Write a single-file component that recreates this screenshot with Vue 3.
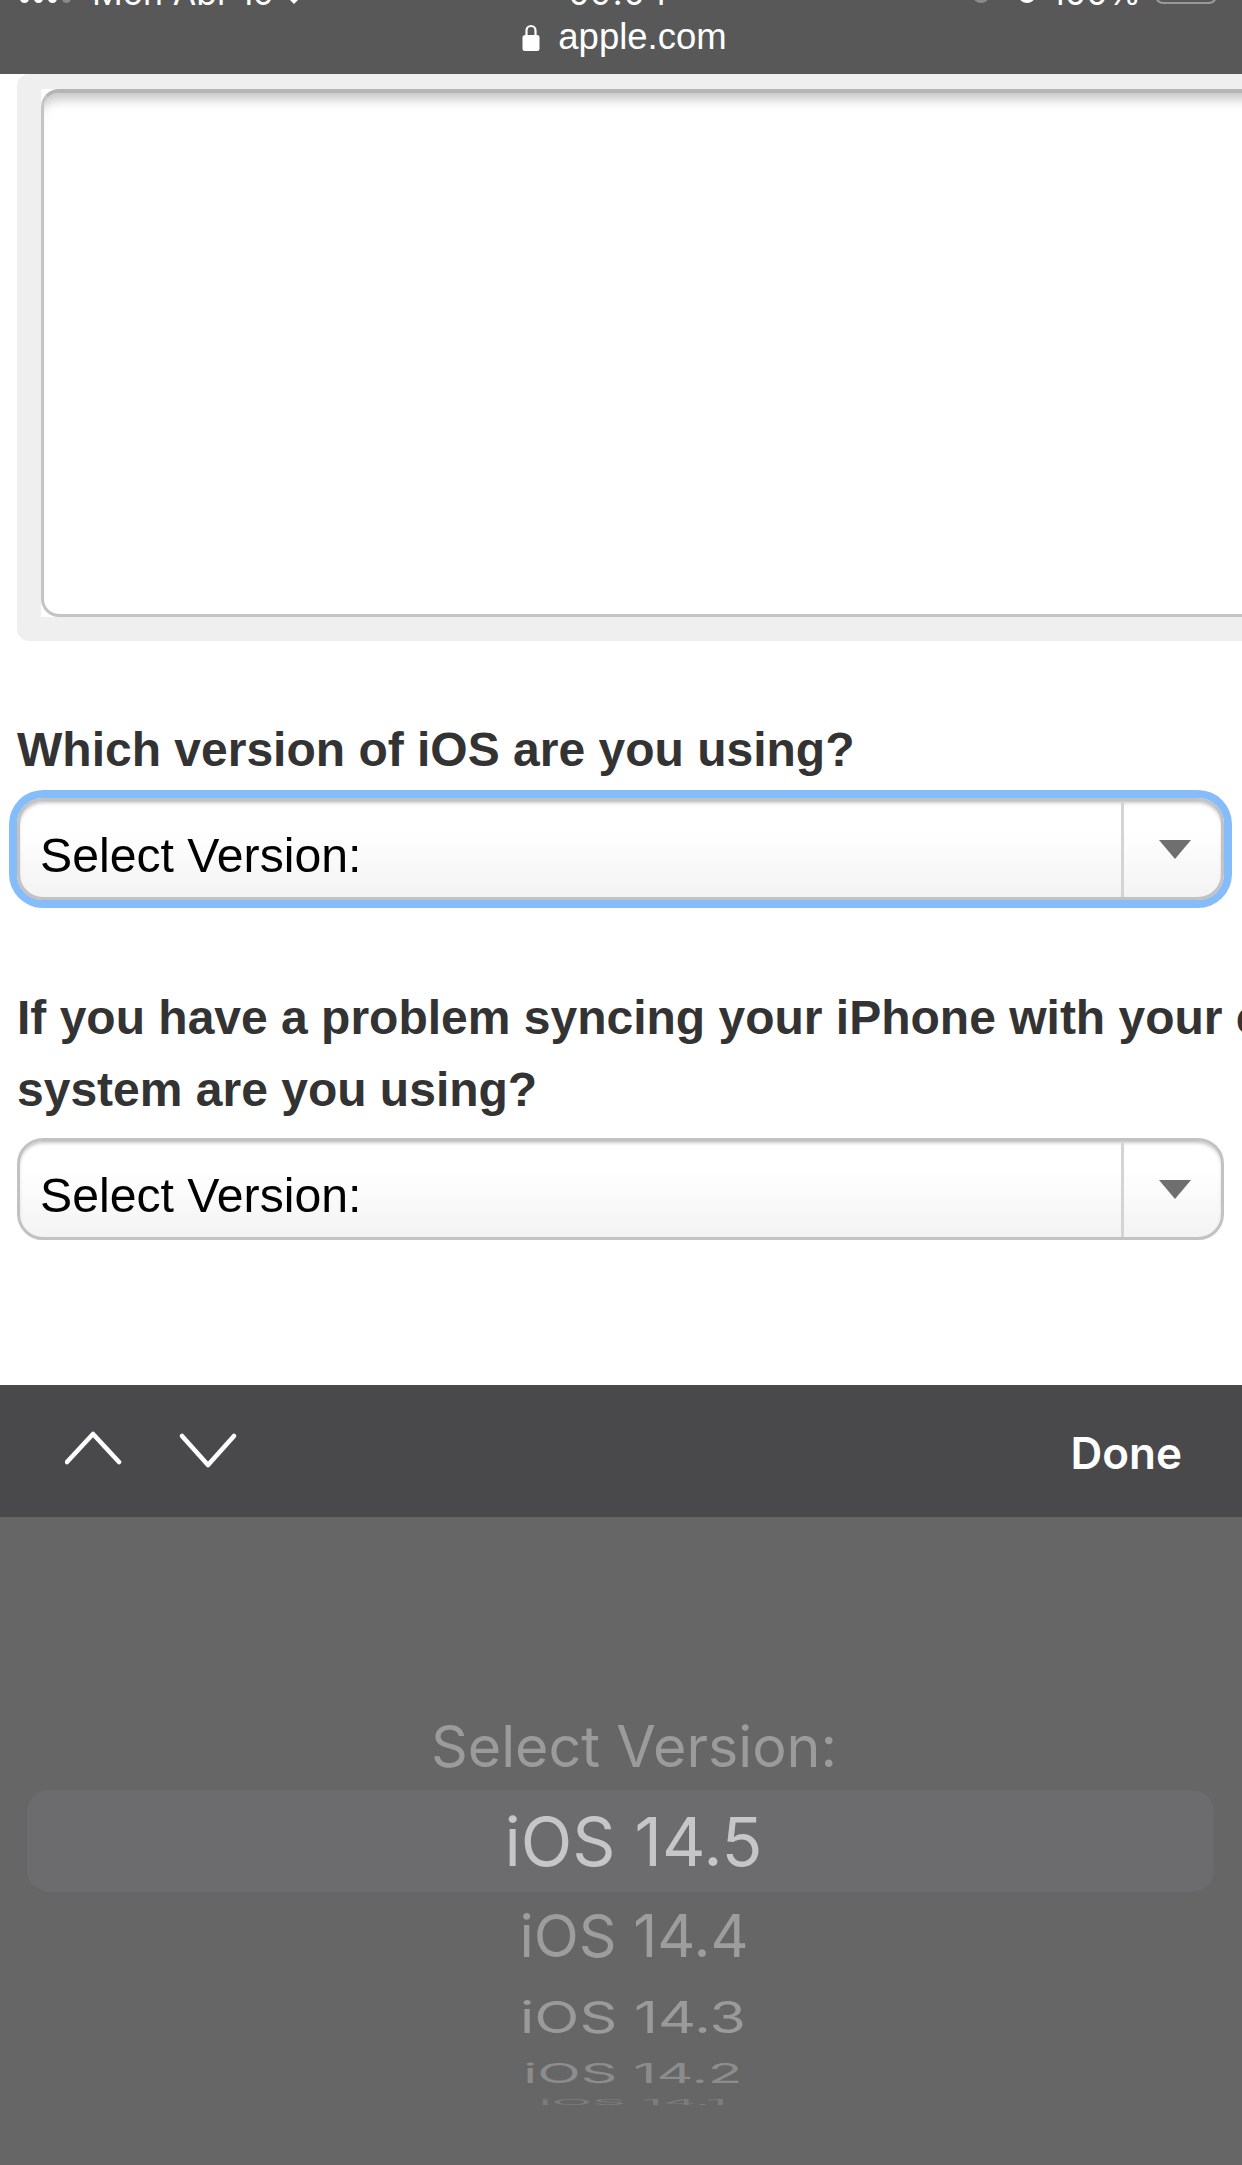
<template>
  <div class="screen">
    <!-- safari bar, status row is scrolled almost out of the picture -->
    <header class="topbar">
      <div class="status">
        <div class="status-left">
          <span class="dots"><i></i><i></i><i></i><i class="off"></i></span>
          <span class="carrier">Mon Apr 19</span>
          <span class="wifi"></span>
        </div>
        <span class="clock">09:04</span>
        <div class="status-right">
          <span class="blob off"></span>
          <span class="blob"></span>
          <span class="percent">100%</span>
          <span class="battery"></span>
        </div>
      </div>
      <div class="url">
        <svg class="lock" width="18" height="27" viewBox="0 0 18 27">
          <path d="M4.5 12V6.5a4.5 4.5 0 0 1 9 0V12" fill="none" stroke="#fff" stroke-width="2.2" />
          <rect x="0.5" y="11" width="17" height="16" rx="2.5" fill="#fff" />
        </svg>
        <span>apple.com</span>
      </div>
    </header>

    <main class="page">
      <div class="panel">
        <div class="textarea-wrap">
          <div class="textarea"></div>
        </div>
      </div>

      <label class="question first">Which version of iOS are you using?</label>
      <div class="select focused">
        <span class="select-value">Select Version:</span>
        <span class="select-arrow"></span>
      </div>

      <label class="question second">If you have a problem syncing your iPhone with your computer, which operating<br />system are you using?</label>
      <div class="select">
        <span class="select-value">Select Version:</span>
        <span class="select-arrow"></span>
      </div>
    </main>

    <div class="toolbar">
      <svg class="nav" width="190" height="40" viewBox="0 0 190 40">
        <path d="M2 33 28 5 54 33" />
        <path d="M117 7 143 36 169 7" />
      </svg>
      <span class="done">Done</span>
    </div>

    <div class="picker">
      <div class="picker-selected"></div>
      <div v-for="item in options" :key="item.label" class="wheel-row" :class="item.cls">
        <span>{{ item.label }}</span>
      </div>
    </div>
  </div>
</template>

<script setup>
const options = [
  { label: 'Select Version:', cls: 'r0' },
  { label: 'iOS 14.5', cls: 'r1' },
  { label: 'iOS 14.4', cls: 'r2' },
  { label: 'iOS 14.3', cls: 'r3' },
  { label: 'iOS 14.2', cls: 'r4' },
  { label: 'iOS 14.1', cls: 'r5' }
]
</script>

<style>
html, body { margin: 0; background: #fff; overflow: hidden; }
</style>

<style scoped>
.screen { width: 1242px; height: 2165px; overflow: hidden; display: flex; flex-direction: column; font-family: "Liberation Sans", Arial, sans-serif; }

.topbar { height: 74px; flex: none; background: #585858; color: #fff; }
.status { height: 5px; padding: 0 25px 0 20px; display: grid; grid-template-columns: 1fr auto 1fr; grid-template-rows: 5px; align-items: end; overflow: hidden; font-family: Inter, sans-serif; font-size: 34px; line-height: 34px; }
.status-left, .status-right { display: flex; align-items: flex-end; height: 5px; }
.status-right { justify-content: flex-end; }
.clock, .carrier, .percent { margin-bottom: -5px; }
.clock { letter-spacing: 1px; }
.dots { display: flex; gap: 5px; margin-bottom: 2px; }
.dots i { width: 9px; height: 9px; border-radius: 50%; background: #fff; }
.dots i.off { background: #8a8a8a; }
.carrier { margin-left: 21px; }
.wifi { width: 0; height: 0; margin: 0 0 1px 14px; border-left: 6px solid transparent; border-right: 6px solid transparent; border-top: 6px solid #fff; }
.blob { width: 16px; height: 14px; border-radius: 50%; background: #fff; margin: 0 16px 2px 0; }
.blob.off { background: #8a8a8a; margin-right: 30px; }
.battery { width: 62px; height: 30px; margin: 0 0 1px 14px; border: 2px solid #9a9a9a; border-radius: 8px; box-sizing: border-box; flex: none; }
.url { height: 69px; box-sizing: border-box; display: flex; align-items: center; justify-content: center; gap: 18px; font-size: 36.5px; padding: 0 0 5px 7px; }
.lock { flex: none; }

.page { height: 1311px; flex: none; overflow: hidden; padding-left: 17px; box-sizing: border-box; }
.panel { width: 1400px; height: 567px; box-sizing: border-box; padding: 15px 0 24px 24px; background: #efefef; border-radius: 12px; }
.textarea-wrap { background: #fff; }
.textarea { height: 528px; box-sizing: border-box; background: #fff; border: 3px solid #c4c4c4; border-top: 4px solid #b5b5b5; border-radius: 18px; box-shadow: inset 0 14px 12px -8px #c4c4c4; }

.question { display: block; width: 1400px; padding-top: 1px; font-size: 48px; line-height: 72px; font-weight: 700; color: #333; white-space: nowrap; }
.question.first { margin-top: 72px; }
.question.second { margin-top: 81px; }

.select { width: 1207px; height: 102px; margin-top: 12px; box-sizing: border-box; display: flex; align-items: center; border: 3px solid #c2c2c2; border-radius: 26px; background: linear-gradient(#fff 30%, #f3f3f3); box-shadow: inset 0 3px 4px -2px #aaa; }
.select.focused { box-shadow: inset 0 3px 4px -2px #aaa, 0 0 0 8px #85bdfb; }
.select-value { flex: 1; padding: 11px 0 0 20px; font-size: 48.2px; color: #000; }
.select-arrow { width: 100px; height: 100%; flex: none; box-sizing: border-box; border-left: 3px solid #d4d4d4; display: flex; align-items: center; justify-content: center; padding-left: 4px; }
.select-arrow::after { content: ""; border-left: 16px solid transparent; border-right: 16px solid transparent; border-top: 19px solid #6f6f6f; }

.toolbar { height: 132px; flex: none; background: #49494b; display: flex; align-items: center; justify-content: space-between; padding: 0 60px 0 65px; box-sizing: border-box; }
.nav { margin-top: -5px; }
.nav path { fill: none; stroke: #fff; stroke-width: 4.6; stroke-linecap: round; stroke-linejoin: round; }
.done { font-family: Inter, sans-serif; font-size: 44px; font-weight: 600; color: #fff; margin-top: 3px; }

.picker { flex: 1; position: relative; background: #666; padding-top: 182px; box-sizing: border-box; font-family: Inter, sans-serif; font-weight: 400; text-align: center; overflow: hidden; }
.picker-selected { position: absolute; top: 273px; left: 27px; right: 28px; height: 102px; border-radius: 22px; background: #6c6c6f; }
.wheel-row { position: relative; display: flex; align-items: center; justify-content: center; padding-left: 24px; }
.wheel-row span { display: block; white-space: nowrap; }
.r0 { height: 94px; font-size: 57.4px; color: #9b9b9b; padding-left: 26px; }
.r1 { height: 96px; font-size: 67.4px; color: #c6c6c8; padding-left: 25px; }
.r2 { height: 92px; font-size: 59px; color: #9d9d9d; padding-left: 26px; }
.r3 { height: 70px; font-size: 59px; color: #9a9a9a; }
.r3 span { transform: scaleY(0.75); }
.r4 { height: 44px; font-size: 57px; color: #8c8c8c; }
.r4 span { transform: scaleY(0.48); }
.r5 { height: 14px; font-size: 53px; color: #7c7c7c; }
.r5 span { transform: scaleY(0.14); }
</style>
